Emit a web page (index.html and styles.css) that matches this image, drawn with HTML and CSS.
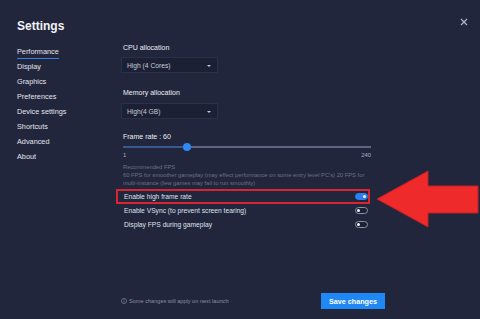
FILE: index.html
```html
<!DOCTYPE html>
<html lang="en">
<head>
    <meta charset="UTF-8">
    <meta name="viewport" content="width=device-width, initial-scale=1.0">
    <title>Settings</title>
    <link rel="stylesheet" href="styles.css">
</head>
<body>
    <div class="window">
        <div class="sidebar">
            <h1 class="title">Settings</h1>
            <ul class="nav">
                <li class="active"><span>Performance</span></li>
                <li><span>Display</span></li>
                <li><span>Graphics</span></li>
                <li><span>Preferences</span></li>
                <li><span>Device settings</span></li>
                <li><span>Shortcuts</span></li>
                <li><span>Advanced</span></li>
                <li><span>About</span></li>
            </ul>
        </div>
        <div class="main">
            <div class="field">
                <div class="label">CPU allocation</div>
                <div class="select">High (4 Cores)<span class="caret"></span></div>
            </div>
            <div class="field">
                <div class="label">Memory allocation</div>
                <div class="select">High(4 GB)<span class="caret"></span></div>
            </div>
            <div class="label">Frame rate : 60</div>
            <div class="slider">
                <div class="track-fill"></div>
                <div class="thumb"></div>
                <div class="track-rest"></div>
            </div>
            <div class="range">
                <span>1</span>
                <span>240</span>
            </div>
            <div class="hint-title">Recommended FPS</div>
            <div class="hint">60 FPS for smoother gameplay (may effect performance on some entry level PC's) 20 FPS for multi-instance (few games may fail to run smoothly)</div>
            <div class="options">
                <div class="opt hl">
                    <span>Enable high frame rate</span>
                    <span class="toggle on"></span>
                </div>
                <div class="opt">
                    <span>Enable VSync (to prevent screen tearing)</span>
                    <span class="toggle"></span>
                </div>
                <div class="opt">
                    <span>Display FPS during gameplay</span>
                    <span class="toggle"></span>
                </div>
            </div>
            <div class="footer">
                <div class="note">
                    <svg width="6" height="6" viewBox="0 0 12 12"><circle cx="6" cy="6" r="5.2" fill="none" stroke="#8a8ea3" stroke-width="1.2"/><line x1="6" y1="5" x2="6" y2="9" stroke="#8a8ea3" stroke-width="1.3"/><circle cx="6" cy="3.3" r="0.8" fill="#8a8ea3"/></svg>
                    Some changes will apply on next launch
                </div>
                <button class="save">Save changes</button>
            </div>
        </div>
        <svg class="close" width="8" height="8" viewBox="0 0 8 8"><path d="M1 1L7 7M7 1L1 7" stroke="#b9bccb" stroke-width="1.1"/></svg>
        <svg class="arrow" width="104" height="58" viewBox="0 0 104 58"><polygon points="1,29 52,1 52,16 102,16 102,43 52,43 52,57" fill="#ee2a2a" stroke="#c31e25" stroke-width="1"/></svg>
    </div>
</body>
</html>
```

FILE: styles.css
```css
body {
    margin: 0;
    background-color: #22263d;
    font-family: "Liberation Sans", Arial, sans-serif;
    color: #e6e7ee;
}
.window {
    position: relative;
    display: flex;
    width: 480px;
    height: 319px;
    overflow: hidden;
}
.sidebar {
    width: 104px;
    padding: 17px 0 0 17px;
    box-sizing: border-box;
}
.title {
    margin: 0;
    font-size: 12px;
    line-height: 18px;
    font-weight: bold;
    color: #f2f3f7;
}
.nav {
    list-style: none;
    margin: 9px 0 0 0;
    padding: 0;
}
.nav li {
    font-size: 7.3px;
    line-height: 15px;
    height: 15px;
    color: #e2e4ec;
}
.nav li.active span {
    padding-bottom: 2px;
    border-bottom: 1px solid #3a7fe0;
}
.main {
    display: flex;
    flex-direction: column;
    width: 264px;
    margin-left: 17px;
    padding: 43px 0 10px 0;
    box-sizing: border-box;
}
.label {
    font-size: 7px;
    line-height: 10px;
    color: #eceef4;
    padding-left: 2px;
}
.field .label {
    margin-bottom: 4px;
}
.field + .field .label {
    margin-bottom: 5px;
}
.field {
    margin-bottom: 15px;
}
.field + .field {
    margin-bottom: 13px;
}
.select {
    position: relative;
    width: 97px;
    height: 16px;
    box-sizing: border-box;
    padding-left: 5px;
    font-size: 6.7px;
    line-height: 16px;
    color: #c9ccd8;
    background: #1c2035;
    border: 1px solid #2b3049;
}
.caret {
    position: absolute;
    right: 6px;
    top: 7px;
    border-left: 2px solid transparent;
    border-right: 2px solid transparent;
    border-top: 2.5px solid #c2c5d2;
}
.slider {
    display: flex;
    align-items: center;
    width: 248px;
    height: 8px;
    margin: 1px 0 0 2px;
}
.track-fill {
    width: 60px;
    height: 2px;
    background: #37598f;
}
.thumb {
    width: 8px;
    height: 8px;
    border-radius: 50%;
    background: #2d8af5;
}
.track-rest {
    flex: 1;
    height: 2px;
    background: #5f6580;
}
.range {
    display: flex;
    justify-content: space-between;
    width: 248px;
    margin-left: 2px;
    font-size: 5.8px;
    line-height: 8px;
    color: #aeb1c0;
}
.hint-title {
    margin: 4px 0 0 2px;
    font-size: 5.8px;
    line-height: 8px;
    color: #6d7188;
}
.hint {
    width: 250px;
    margin-left: 2px;
    font-size: 5.8px;
    line-height: 8px;
    color: #6d7188;
}
.options {
    margin: 2px 0 0 -5px;
    width: 254px;
}
.opt {
    display: flex;
    justify-content: space-between;
    align-items: center;
    height: 14px;
    padding: 0 0 0 6px;
    box-sizing: border-box;
    border: 2px solid transparent;
    font-size: 6.7px;
    color: #dfe1e9;
}
.opt.hl {
    border-color: #d8252f;
    height: 15px;
    margin-bottom: -1px;
}
.toggle {
    position: relative;
    width: 13px;
    height: 7px;
    box-sizing: border-box;
    border-radius: 4px;
    border: 1px solid #8c90a5;
    background: #1d2136;
}
.toggle::after {
    content: "";
    position: absolute;
    left: 1px;
    top: 1px;
    width: 3px;
    height: 3px;
    border-radius: 50%;
    background: #f2f3f7;
}
.toggle.on {
    border-color: #2b7ff0;
    background: #2b7ff0;
}
.toggle.on::after {
    left: auto;
    right: 1px;
}
.footer {
    margin-top: auto;
    display: flex;
    justify-content: space-between;
    align-items: center;
}
.note {
    display: flex;
    align-items: center;
    gap: 2px;
    font-size: 5.6px;
    color: #8a8ea3;
}
.save {
    width: 64px;
    height: 16px;
    padding: 0;
    border: none;
    background: #1f88f4;
    color: #fff;
    font-family: "Liberation Sans", Arial, sans-serif;
    font-size: 7.2px;
    font-weight: bold;
}
.close {
    position: absolute;
    top: 18px;
    left: 460px;
}
.arrow {
    position: absolute;
    top: 170px;
    left: 376px;
}
```
